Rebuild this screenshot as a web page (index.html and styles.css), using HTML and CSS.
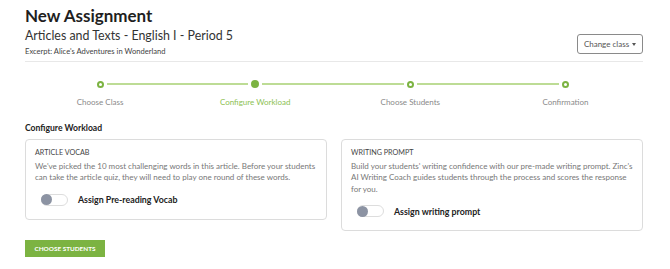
FILE: index.html
```html
<!DOCTYPE html>
<html>
<head>
<meta charset="utf-8">
<link rel="stylesheet" href="styles.css">
</head>
<body>
<div class="page">
  <header class="header">
    <div class="titles">
      <h1 class="title">New Assignment</h1>
      <div class="subtitle">Articles and Texts - English I - Period 5</div>
      <div class="excerpt">Excerpt: Alice's Adventures in Wonderland</div>
    </div>
    <button class="change-btn">Change class <span class="caret"></span></button>
  </header>

  <div class="stepper">
    <div class="step done"><div class="track"><span class="dot"></span></div><div class="step-label">Choose Class</div></div>
    <div class="step active"><div class="track"><span class="dot"></span></div><div class="step-label">Configure Workload</div></div>
    <div class="step"><div class="track"><span class="dot"></span></div><div class="step-label">Choose Students</div></div>
    <div class="step"><div class="track"><span class="dot"></span></div><div class="step-label">Confirmation</div></div>
  </div>

  <h2 class="section-title">Configure Workload</h2>

  <div class="cards">
    <div class="card">
      <div class="card-title">ARTICLE VOCAB</div>
      <p class="card-text">We've picked the 10 most challenging words in this article. Before your students can take the article quiz, they will need to play one round of these words.</p>
      <div class="toggle-row">
        <span class="toggle"><span class="knob"></span></span>
        <span class="toggle-label">Assign Pre-reading Vocab</span>
      </div>
    </div>
    <div class="card">
      <div class="card-title">WRITING PROMPT</div>
      <p class="card-text">Build your students' writing confidence with our pre-made writing prompt. Zinc's AI Writing Coach guides students through the process and scores the response for you.</p>
      <div class="toggle-row">
        <span class="toggle"><span class="knob"></span></span>
        <span class="toggle-label">Assign writing prompt</span>
      </div>
    </div>
  </div>

  <button class="primary-btn">CHOOSE STUDENTS</button>
</div>
</body>
</html>
```
FILE: styles.css
```css
* { box-sizing: border-box; }
html, body { margin: 0; padding: 0; background: #fff; }
body {
  font-family: "Lato", "Noto Sans", sans-serif;
  color: #222;
}
.page {
  width: 618px;
  margin-left: 25px;
  padding-top: 6px;
}
.header {
  display: flex;
  justify-content: space-between;
  align-items: flex-end;
  border-bottom: 1px solid #e8e8e8;
  padding-bottom: 4px;
}
.title {
  margin: 0;
  font-size: 17px;
  line-height: 20px;
  font-weight: 700;
  color: #1f1f1f;
}
.subtitle {
  margin-top: 2px;
  font-size: 12.4px;
  line-height: 16px;
  color: #333;
}
.excerpt {
  font-size: 7.6px;
  line-height: 12px;
  margin-top: 1px;
  color: #444;
}
.change-btn {
  font-family: inherit;
  font-size: 8px;
  color: #555;
  background: #fff;
  border: 1px solid #8a8a8a;
  border-radius: 3px;
  height: 20px;
  width: 66px;
  padding: 0;
  margin-bottom: 3px;
  display: flex;
  justify-content: center;
  align-items: center;
  gap: 3px;
}
.caret {
  width: 0; height: 0;
  border-left: 2.5px solid transparent;
  border-right: 2.5px solid transparent;
  border-top: 3px solid #555;
}
.stepper {
  display: grid;
  grid-template-columns: repeat(4, 1fr);
  margin-top: 18px;
  margin-left: -2.5px;
}
.step { display: flex; flex-direction: column; align-items: center; }
.track {
  width: 100%;
  height: 8px;
  display: flex;
  justify-content: center;
  align-items: center;
}
.track::before, .track::after {
  content: "";
  flex: 1;
  height: 1.5px;
  background: #bddc95;
}
.step:first-child .track::before,
.step:last-child .track::after { visibility: hidden; }
.dot {
  width: 7px; height: 7px;
  border-radius: 50%;
  border: 2px solid #7cb342;
  background: #fff;
  margin: 0 3px;
}
.step.active .dot { background: #7cb342; width: 8px; height: 8px; }
.step-label {
  margin-top: 8.5px;
  font-size: 8px;
  line-height: 11px;
  color: #8a8a8a;
}
.step.active .step-label { color: #8cbf52; }
.section-title {
  margin: 14px 0 0;
  font-size: 8.6px;
  font-weight: 700;
  line-height: 12px;
  color: #222;
}
.cards {
  display: flex;
  gap: 14px;
  align-items: flex-start;
  margin-top: 5px;
}
.card {
  flex: 1;
  border: 1px solid #dcdcdc;
  border-radius: 4px;
  padding: 8px 9px 13px;
}
.card-title {
  font-size: 7.2px;
  line-height: 10px;
  color: #444;
}
.card-text {
  margin: 3px 0 0;
  font-size: 8px;
  line-height: 11.5px;
  color: #777;
}
.toggle-row {
  display: flex;
  align-items: center;
  gap: 10px;
  margin-top: 10px;
  padding-left: 6px;
}
.toggle {
  width: 27px; height: 12px;
  border: 1px solid #ddd;
  border-radius: 6px;
  background: #fff;
  display: flex;
  align-items: center;
}
.knob {
  width: 11px; height: 11px;
  border-radius: 50%;
  background: #8c93a3;
  margin-left: -1px;
}
.toggle-label {
  font-size: 8.8px;
  font-weight: 700;
  color: #222;
}
.primary-btn {
  margin-top: 9px;
  font-family: inherit;
  background: #7cb342;
  color: #fff;
  border: none;
  height: 17px;
  width: 80px;
  font-size: 6.4px;
  font-weight: 700;
  padding: 0;
  display: block;
}
```
